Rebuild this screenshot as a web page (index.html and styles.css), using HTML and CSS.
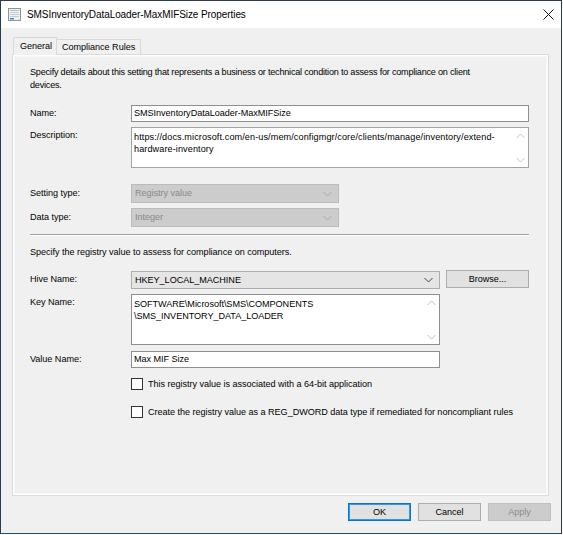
FILE: index.html
```html
<!DOCTYPE html>
<html>
<head>
<meta charset="utf-8">
<link rel="stylesheet" href="styles.css">
</head>
<body>
<div class="window">
  <div class="titlebar">
    <svg class="app-icon" width="13" height="13" viewBox="0 0 13 13">
      <rect x="0.5" y="0.5" width="12" height="12" fill="#eef1f4" stroke="#8e9297"/>
      <rect x="2" y="2" width="9" height="1" fill="#b9c0c8"/>
      <rect x="2" y="4" width="9" height="1" fill="#c9ced4"/>
      <rect x="2" y="6" width="9" height="1" fill="#c9ced4"/>
      <rect x="2" y="8" width="9" height="1" fill="#c9ced4"/>
      <rect x="2" y="10" width="4" height="1.5" fill="#3c8fd8"/>
    </svg>
    <span class="title">SMSInventoryDataLoader-MaxMIFSize Properties</span>
    <svg class="close" width="11" height="11" viewBox="0 0 11 11">
      <path d="M0.5 0.5 L10.5 10.5 M10.5 0.5 L0.5 10.5" stroke="#111" stroke-width="1"/>
    </svg>
  </div>
  <div class="client">
    <div class="tabs">
      <div class="tab active">General</div>
      <div class="tab">Compliance Rules</div>
    </div>
    <div class="panel">
      <p class="intro">Specify details about this setting that represents a business or technical condition to assess for compliance on client devices.</p>
      <div class="form">
        <div class="label lab-name">Name:</div>
        <div class="textbox wide">SMSInventoryDataLoader-MaxMIFSize</div>

        <div class="label lab-desc">Description:</div>
        <div class="textarea wide desc">
          <div class="ta-text url">https://docs.microsoft.com/en-us/mem/configmgr/core/clients/manage/inventory/extend-hardware-inventory</div>
          <div class="scroll">
            <svg width="9" height="6" viewBox="0 0 9 6"><path d="M0.5 5 L4.5 1 L8.5 5" fill="none" stroke="#c2c2c2"/></svg>
            <svg width="9" height="6" viewBox="0 0 9 6"><path d="M0.5 1 L4.5 5 L8.5 1" fill="none" stroke="#c2c2c2"/></svg>
          </div>
        </div>

        <div class="label lab-type gap-lg">Setting type:</div>
        <div class="combo disabled gap-lg">
          <span>Registry value</span>
          <svg width="9" height="6" viewBox="0 0 9 6"><path d="M0.5 1 L4.5 5 L8.5 1" fill="none" stroke="#a8a8a8"/></svg>
        </div>

        <div class="label lab-type">Data type:</div>
        <div class="combo disabled">
          <span>Integer</span>
          <svg width="9" height="6" viewBox="0 0 9 6"><path d="M0.5 1 L4.5 5 L8.5 1" fill="none" stroke="#a8a8a8"/></svg>
        </div>
      </div>

      <div class="separator"></div>

      <p class="intro2">Specify the registry value to assess for compliance on computers.</p>

      <div class="form form2">
        <div class="label lab-hive">Hive Name:</div>
        <div class="hive-row">
          <div class="combo hive">
            <span>HKEY_LOCAL_MACHINE</span>
            <svg width="9" height="6" viewBox="0 0 9 6"><path d="M0.5 1 L4.5 5 L8.5 1" fill="none" stroke="#444"/></svg>
          </div>
          <div class="button browse">Browse...</div>
        </div>

        <div class="label lab-key">Key Name:</div>
        <div class="textarea mid key">
          <div class="ta-text">SOFTWARE\Microsoft\SMS\COMPONENTS<br>\SMS_INVENTORY_DATA_LOADER</div>
          <div class="scroll">
            <svg width="9" height="6" viewBox="0 0 9 6"><path d="M0.5 5 L4.5 1 L8.5 5" fill="none" stroke="#c2c2c2"/></svg>
            <svg width="9" height="6" viewBox="0 0 9 6"><path d="M0.5 1 L4.5 5 L8.5 1" fill="none" stroke="#c2c2c2"/></svg>
          </div>
        </div>

        <div class="label lab-val">Value Name:</div>
        <div class="textbox mid">Max MIF Size</div>

        <div class="spacer"></div>
        <div class="checks">
          <div class="check"><span class="box"></span><span>This registry value is associated with a 64-bit application</span></div>
          <div class="check"><span class="box"></span><span>Create the registry value as a REG_DWORD data type if remediated for noncompliant rules</span></div>
        </div>
      </div>
    </div>
    <div class="buttons">
      <div class="button default">OK</div>
      <div class="button">Cancel</div>
      <div class="button disabled">Apply</div>
    </div>
  </div>
</div>
</body>
</html>
```

FILE: styles.css
```css
* { box-sizing: border-box; }
html, body { margin: 0; padding: 0; background: #ffffff; }
body {
  width: 563px;
  height: 535px;
  font-family: "Liberation Sans", Arial, sans-serif;
  font-size: 9.1px;
  letter-spacing: -0.04px;
  color: #000;
}
.window {
  width: 562px;
  height: 534px;
  border: 1px solid #2b3a4c;
  border-bottom-color: #1f4e7d;
  background: #f0f0f0;
  display: flex;
  flex-direction: column;
}
.titlebar {
  height: 27px;
  background: #fff;
  display: flex;
  align-items: center;
  padding-left: 7px;
  padding-right: 7px;
  flex: none;
}
.app-icon { flex: none; }
.title {
  margin-left: 6px;
  font-size: 10px;
  letter-spacing: -0.08px;
  color: #000;
  flex: 1;
}
.close { flex: none; }
.client {
  flex: 1;
  padding: 9px 0 0 11px;
  display: flex;
  flex-direction: column;
}
.tabs {
  display: flex;
  align-items: flex-end;
  height: 17px;
  position: relative;
  z-index: 1;
  padding-left: 1px;
}
.tab {
  height: 15px;
  padding: 0 5px;
  border: 1px solid #d9d9d9;
  border-bottom: none;
  background: #f0f0f0;
  line-height: 14px;
  margin-left: -1px;
}
.tab.active {
  height: 18px;
  margin-bottom: -1px;
  background: #f0f0f0;
  padding: 0 0 0 6px;
  line-height: 16px;
  margin-left: 0;
  width: 44px;
}
.panel {
  width: 537px;
  height: 442px;
  border: 1px solid #dadada;
  box-shadow: inset 0 0 0 1px #ffffff, inset 0 0 0 2px #f7f7f7;
  padding: 11px 19px 0 17px;
  display: flex;
  flex-direction: column;
}
.intro {
  margin: 0;
  line-height: 13px;
  width: 470px;
  letter-spacing: -0.22px;
}
.form {
  display: grid;
  grid-template-columns: 101px 1fr;
  align-items: start;
  margin-top: 13px;
}
.label { line-height: 13px; }
.lab-name { padding-top: 2px; }
.lab-desc { padding-top: 2px; margin-top: 5px; }
.lab-type { padding-top: 3px; margin-top: 5px; }
.gap-lg { margin-top: 16px; }
.textbox {
  height: 17px;
  background: #fff;
  border: 1px solid #8f8f8f;
  line-height: 15px;
  padding-left: 2px;
}
.wide { width: 398px; }
.mid { width: 309px; }
.textarea {
  background: #fff;
  border: 1px solid #a3a3a3;
  display: flex;
  margin-top: 5px;
}
.textarea.desc { height: 41px; }
.textarea.key { height: 51px; border-color: #8f8f8f; }
.ta-text {
  flex: 1;
  line-height: 12px;
  padding: 3px 0 0 2px;
}
.ta-text.url { letter-spacing: 0.1px; }
.scroll {
  width: 16px;
  display: flex;
  flex-direction: column;
  justify-content: space-between;
  align-items: center;
  padding: 5px 0 4px 0;
}
.combo {
  height: 19px;
  width: 208px;
  border: 1px solid #adadad;
  display: flex;
  align-items: center;
  justify-content: space-between;
  padding: 0 6px 0 3px;
  line-height: 17px;
}
.combo.disabled {
  background: #cccccc;
  border-color: #bcbcbc;
  color: #8a8a8a;
  margin-top: 5px;
}
.combo.disabled.gap-lg { margin-top: 16px; }
.separator {
  margin-top: 7px;
  width: 499px;
  height: 2px;
  border-top: 1px solid #a0a0a0;
  border-bottom: 1px solid #ffffff;
}
.intro2 {
  margin: 10px 0 0 0;
  line-height: 13px;
}
.form2 { margin-top: 11px; }
.lab-hive { padding-top: 3px; }
.hive-row {
  display: flex;
  align-items: flex-start;
  gap: 6px;
}
.combo.hive {
  width: 309px;
  height: 18px;
  margin-top: 1px;
  background: #e5e5e5;
  border-color: #adadad;
}
.button {
  height: 18px;
  background: #e1e1e1;
  border: 1px solid #adadad;
  text-align: center;
  line-height: 16px;
}
.browse { width: 83px; }
.lab-key { margin-top: 5px; padding-top: 2px; }
.lab-val { margin-top: 6px; padding-top: 2px; }
.form2 .textbox { margin-top: 6px; }
.checks {
  display: flex;
  flex-direction: column;
  gap: 16px;
  margin-top: 10px;
}
.check {
  display: flex;
  align-items: center;
  gap: 5px;
  height: 12px;
}
.box {
  width: 12px;
  height: 12px;
  border: 1px solid #333333;
  background: #fff;
  flex: none;
}
.buttons {
  display: flex;
  justify-content: flex-end;
  gap: 7px;
  padding-right: 10px;
  margin-top: 7px;
}
.buttons .button { width: 63px; height: 18px; }
.button.default {
  border-color: #0078d7;
  box-shadow: inset 0 0 0 1px #3c95dd;
}
.button.disabled {
  background: #cccccc;
  border-color: #bfbfbf;
  color: #8b8b8b;
}
```
